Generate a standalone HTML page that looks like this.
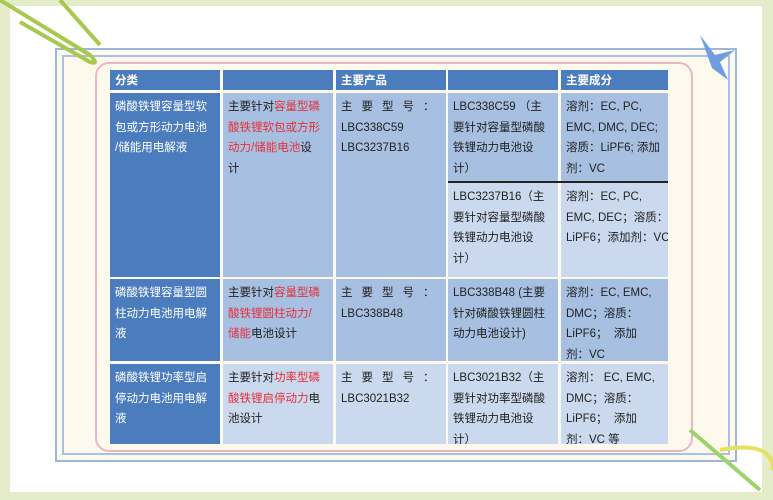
<!DOCTYPE html>
<html><head><meta charset="utf-8"><style>
*{margin:0;padding:0;box-sizing:border-box}
body{width:773px;height:500px;background:#e4ecc9;position:relative;overflow:hidden;font-family:"Liberation Sans","Noto Sans CJK SC",sans-serif;font-size:12px}
.card{position:absolute;left:10px;top:6px;width:752px;height:486px;background:#fff}
.frame{position:absolute;left:55px;top:48px;width:682px;height:414px;background:#fdf9ec;border:2px solid #9db6dc}
.frame2{position:absolute;left:62px;top:55px;width:668px;height:400px;border:2px solid #a9c0e6}
.pink{position:absolute;left:95px;top:62px;width:598px;height:390px;border:2px solid #e9b8c6;border-radius:14px}
.c{position:absolute;padding:4px 0 0 5px;line-height:20.6px;color:#222;white-space:nowrap;overflow:hidden;font-size:11.5px}
.h{background:#4a7cbe;color:#fff;font-weight:bold;padding-top:1px}
.d{background:#4a7cbe;color:#fff}
.m{background:#a7bfe0}
.l{background:#cbd9ee}
.r{color:#e8303a}
</style></head><body>
<div class="card"></div>
<div class="frame"></div>
<div class="frame2"></div>
<div class="pink"></div>
<svg style="position:absolute;left:0;top:0" width="773" height="500">
<path d="M0 0 L90 55 Q100 65 90 62 L20 22" stroke="#a8c850" stroke-width="4" fill="none"/>
<path d="M60 0 L100 45" stroke="#a8c850" stroke-width="4" fill="none"/>
<path d="M690 430 L760 490" stroke="#9cd36a" stroke-width="4" fill="none"/>
<path d="M720 450 Q773 440 773 470" stroke="#e8e060" stroke-width="4" fill="none"/>
<path d="M700 35 L715 55 L735 50 L720 62 L728 80 L712 68" fill="#6f9de0"/>
</svg>
<div class="c h" style="left:110px;top:70px;width:110px;height:20px">分类</div>
<div class="c h" style="left:223px;top:70px;width:110px;height:20px"></div>
<div class="c h" style="left:336px;top:70px;width:110px;height:20px">主要产品</div>
<div class="c h" style="left:448px;top:70px;width:110px;height:20px"></div>
<div class="c h" style="left:561px;top:70px;width:107px;height:20px">主要成分</div>

<div class="c d" style="left:110px;top:93px;width:110px;height:184px">磷酸铁锂容量型软<br>包或方形动力电池<br>/储能用电解液</div>
<div class="c m" style="left:223px;top:93px;width:110px;height:184px">主要针对<span class="r">容量型磷<br>酸铁锂软包或方形<br>动力/储能电池</span>设<br>计</div>
<div class="c m" style="left:336px;top:93px;width:110px;height:184px"><span style="letter-spacing:9px">主要型号</span>：<br>LBC338C59<br>LBC3237B16</div>
<div class="c m" style="left:448px;top:93px;width:110px;height:88px">LBC338C59 （主<br>要针对容量型磷酸<br>铁锂动力电池设<br>计）</div>
<div class="c m" style="left:561px;top:93px;width:107px;height:88px">溶剂：EC, PC,<br>EMC, DMC, DEC;<br>溶质：LiPF6; 添加<br>剂：VC</div>
<div style="position:absolute;left:448px;top:181px;width:220px;height:2px;background:#222"></div>
<div class="c l" style="left:448px;top:183px;width:110px;height:94px">LBC3237B16（主<br>要针对容量型磷酸<br>铁锂动力电池设<br>计）</div>
<div class="c l" style="left:561px;top:183px;width:107px;height:94px">溶剂：EC, PC,<br>EMC, DEC；溶质：<br>LiPF6；添加剂：VC</div>

<div class="c d" style="left:110px;top:279px;width:110px;height:82px">磷酸铁锂容量型圆<br>柱动力电池用电解<br>液</div>
<div class="c m" style="left:223px;top:279px;width:110px;height:82px">主要针对<span class="r">容量型磷<br>酸铁锂圆柱动力/<br>储能</span>电池设计</div>
<div class="c m" style="left:336px;top:279px;width:110px;height:82px"><span style="letter-spacing:9px">主要型号</span>：<br>LBC338B48</div>
<div class="c m" style="left:448px;top:279px;width:110px;height:82px">LBC338B48 (主要<br>针对磷酸铁锂圆柱<br>动力电池设计)</div>
<div class="c m" style="left:561px;top:279px;width:107px;height:82px">溶剂：EC, EMC,<br>DMC；溶质：<br>LiPF6；&nbsp; 添加<br>剂：VC</div>

<div class="c d" style="left:110px;top:364px;width:110px;height:80px">磷酸铁锂功率型启<br>停动力电池用电解<br>液</div>
<div class="c l" style="left:223px;top:364px;width:110px;height:80px">主要针对<span class="r">功率型磷<br>酸铁锂启停动力</span>电<br>池设计</div>
<div class="c l" style="left:336px;top:364px;width:110px;height:80px"><span style="letter-spacing:9px">主要型号</span>：<br>LBC3021B32</div>
<div class="c l" style="left:448px;top:364px;width:110px;height:80px">LBC3021B32（主<br>要针对功率型磷酸<br>铁锂动力电池设<br>计）</div>
<div class="c l" style="left:561px;top:364px;width:107px;height:80px">溶剂： EC, EMC,<br>DMC；溶质：<br>LiPF6；&nbsp; 添加<br>剂：VC 等</div>
</body></html>
